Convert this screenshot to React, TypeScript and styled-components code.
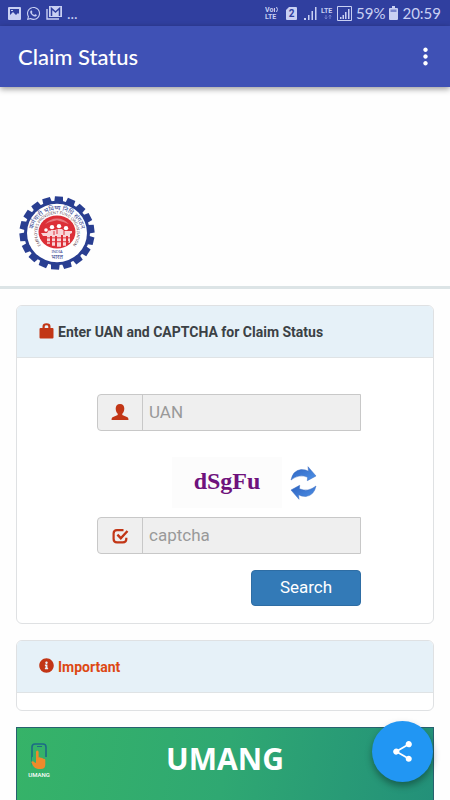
import React from "react";
import styled, { createGlobalStyle } from "styled-components";
import { FaInfoCircle, FaWhatsapp } from "react-icons/fa";
import { MdShare, MdMoreVert } from "react-icons/md";

const GlobalStyle = createGlobalStyle`
  *, *::before, *::after { box-sizing: border-box; }
  body {
    margin: 0;
    background: #fefefe;
    font-family: Roboto, "Liberation Sans", sans-serif;
    color: #3b4145;
  }
`;

const Page = styled.div`
  display: flex;
  flex-direction: column;
  height: 100vh;
  overflow: hidden;
`;

const StatusBar = styled.div`
  display: flex;
  flex: none;
  align-items: center;
  justify-content: space-between;
  height: 26px;
  padding: 0 9px 0 8px;
  background: #303f9f;
  color: #c9d0f3;
  font-family: Lato, sans-serif;
  font-size: 15px;
  line-height: 26px;
`;

const StatusGroup = styled.div<{ $gap: number }>`
  display: flex;
  align-items: center;
  gap: ${(p) => p.$gap}px;

  svg {
    display: block;
    flex: none;
  }
`;

const AppBar = styled.header`
  display: flex;
  flex: none;
  z-index: 1;
  align-items: center;
  justify-content: space-between;
  height: 61px;
  padding: 0 11px 0 18px;
  background: #3f51b5;
  color: #fff;
  box-shadow: 0 2px 6px rgba(0, 0, 0, 0.4);
`;

const Title = styled.h1`
  margin: 0;
  font-family: Lato, sans-serif;
  font-size: 22px;
  font-weight: 500;
  line-height: 28px;
`;

const MenuButton = styled.button`
  display: flex;
  padding: 0;
  border: 0;
  background: none;
  color: inherit;
`;

const LogoBand = styled.div`
  flex: none;
  padding: 109px 18px 16px;
  border-bottom: 3px solid #dce4e6;

  svg {
    display: block;
  }
`;

const Content = styled.main`
  display: flex;
  flex: 1;
  flex-direction: column;
  gap: 16px;
  min-height: 0;
  padding: 16px 16px 0;
`;

const Card = styled.section`
  flex: none;
  overflow: hidden;
  border: 1px solid #dfe1e3;
  border-radius: 6px;
  background: #fff;
`;

const CardHeader = styled.h2<{ $accent?: boolean }>`
  display: flex;
  align-items: center;
  gap: 4px;
  height: 52px;
  margin: 0;
  padding: 0 22px;
  border-bottom: 1px solid #dfe3e5;
  background: #e6f1f8;
  color: ${(p) => (p.$accent ? "#dd4814" : "#3b4145")};
  font-size: 14px;
  font-weight: 700;
  line-height: 20px;

  svg {
    flex: none;
    margin-bottom: 2px;
    color: #c23616;
  }
`;

const CardBody = styled.div`
  height: 17px;
`;

const Form = styled.form`
  display: flex;
  flex-direction: column;
  padding: 36px 72px 17px 80px;
`;

const InputGroup = styled.div`
  display: flex;
  height: 37px;
  border: 1px solid #c8c8c8;
  border-radius: 4px 0 0 4px;
  background: #efefef;
`;

const Addon = styled.label`
  display: flex;
  flex: none;
  align-items: center;
  justify-content: center;
  width: 45px;
  border-right: 1px solid #c8c8c8;
  color: #c23616;
`;

const Field = styled.input`
  flex: 1;
  min-width: 0;
  padding: 0 6px 2px;
  border: 0;
  background: none;
  color: #444;
  font-family: inherit;
  font-size: 17px;

  &::placeholder {
    color: #999;
    opacity: 1;
  }
`;

const CaptchaRow = styled.div`
  display: flex;
  align-items: center;
  justify-content: flex-end;
  gap: 8px;
  padding: 26px 44px 9px 0;
`;

const CaptchaCode = styled.div`
  width: 110px;
  height: 51px;
  background: #fcfcfc;
  color: #6f127c;
  font-family: "Liberation Serif", serif;
  font-size: 24px;
  font-weight: 700;
  line-height: 49px;
  text-align: center;
`;

const RefreshButton = styled.button`
  display: flex;
  padding: 0;
  border: 0;
  background: none;
`;

const SearchButton = styled.button`
  align-self: flex-end;
  width: 110px;
  height: 36px;
  margin-top: 16px;
  padding: 0 0 2px;
  border: 1px solid #2e6da4;
  border-radius: 4px;
  background: #337ab7;
  color: #fff;
  font-family: inherit;
  font-size: 17px;
  line-height: 32px;
`;

const Banner = styled.a`
  display: grid;
  flex: 1;
  grid-template-columns: 44px 1fr 44px;
  align-items: start;
  min-height: 73px;
  border: 1px solid #28616f;
  border-bottom: 0;
  background: linear-gradient(100deg, #36b368 0%, #2fa872 50%, #239079 100%);
  color: #fff;
  text-decoration: none;
`;

const UmangMark = styled.span`
  display: flex;
  flex-direction: column;
  align-items: center;
  padding-top: 15px;
  font-size: 6px;
  font-weight: 500;
  line-height: 9px;
`;

const BannerTitle = styled.span`
  padding-top: 13px;
  font-family: "Open Sans", sans-serif;
  font-size: 30px;
  font-weight: 700;
  line-height: 36px;
  text-align: center;
`;

const ShareButton = styled.button`
  position: fixed;
  right: 17px;
  bottom: 18px;
  display: flex;
  align-items: center;
  justify-content: center;
  width: 61px;
  height: 61px;
  padding: 0;
  border: 0;
  border-radius: 50%;
  background: #2196f3;
  color: #fff;
  box-shadow: 0 4px 7px rgba(0, 0, 0, 0.35);
`;

const PictureIcon = () => (
  <svg width="13" height="13" viewBox="0 0 13 13">
    <path
      fill="currentColor"
      fillRule="evenodd"
      d="M1 0h11a1 1 0 0 1 1 1v11a1 1 0 0 1-1 1H1a1 1 0 0 1-1-1V1a1 1 0 0 1 1-1zM2 2v6l3-3 3 3 2-2 1 1V2zM3 3h2v1H3z"
    />
  </svg>
);

const MailIcon = () => (
  <svg width="16" height="14" viewBox="0 0 16 14" fill="none" stroke="currentColor">
    <path d="M1 3v10h12" strokeWidth="1.4" />
    <path d="M3 0h13v11H3z" fill="currentColor" stroke="none" />
    <path d="M5.500 10V2.500l4 3.500 4-3.500V10" stroke="#303f9f" strokeWidth="1.500" />
  </svg>
);

const VolteIcon = () => (
  <svg width="14" height="16" viewBox="0 0 14 16" fill="currentColor">
    <g fontFamily="Roboto, sans-serif" fontWeight="700" fontSize="7">
      <text x="0" y="7">Vo</text>
      <text x="0" y="14">LTE</text>
    </g>
    <path d="M9.500 3v4M11.500 2q2 2.500 0 5" fill="none" stroke="currentColor" />
  </svg>
);

const SimIcon = () => (
  <svg width="11" height="13" viewBox="0 0 11 13">
    <path d="M3 0h7a1 1 0 0 1 1 1v11a1 1 0 0 1-1 1H1a1 1 0 0 1-1-1V3z" fill="currentColor" />
    <text x="5.500" y="10" textAnchor="middle" fill="#303f9f" fontFamily="Roboto, sans-serif" fontWeight="700" fontSize="10">
      2
    </text>
  </svg>
);

const SignalIcon = () => (
  <svg width="13" height="13" viewBox="0 0 13 13" fill="currentColor">
    <path d="M0 11h2v2H0zM4 8h1.500v5H4zM7.500 4H9v9H7.500zM11 0h1.500v13H11z" />
  </svg>
);

const LteIcon = () => (
  <svg width="14" height="15" viewBox="0 0 14 15">
    <text x="0" y="7" fill="currentColor" fontFamily="Roboto, sans-serif" fontWeight="700" fontSize="7">
      LTE
    </text>
    <path d="M5 9v4M3.800 11.500 5 13l1.200-1.500M9 13V9M7.800 10.500 9 9l1.200 1.500" fill="none" stroke="#7480cc" />
  </svg>
);

const BoxedSignalIcon = () => (
  <svg width="15" height="15" viewBox="0 0 15 15">
    <path d="M.5.5h14v14H.5z" fill="none" stroke="currentColor" />
    <path d="M3 11h1.500v2H3zM5.500 9H7v4H5.500zM8 6h1.500v7H8zM11 3h1.500v10H11z" fill="currentColor" />
  </svg>
);

const BatteryIcon = () => (
  <svg width="9" height="14" viewBox="0 0 9 14">
    <path d="M3 0h3v2h2a1 1 0 0 1 1 1v10a1 1 0 0 1-1 1H1a1 1 0 0 1-1-1V3a1 1 0 0 1 1-1h2z" fill="currentColor" />
    <path d="M1.500 3.500h6V6h-6z" fill="#7884cd" />
  </svg>
);

const LockIcon = () => (
  <svg width="15" height="16" viewBox="0 0 15 16" aria-hidden="true">
    <path
      fill="currentColor"
      fillRule="evenodd"
      d="M3.500 5V3.500Q3.500.3 7.500.3t4 3.200V5h2q1 0 1 1v8.500q0 1-1 1h-12q-1 0-1-1V6q0-1 1-1zm2.200 0h3.600V3.700Q9.300 2.300 7.500 2.300T5.700 3.700z"
    />
  </svg>
);

const UserIcon = () => (
  <svg width="18" height="18" viewBox="0 0 18 18" aria-hidden="true">
    <path
      fill="currentColor"
      d="M9 0c2.900 0 4.300 1.800 4.300 4.500 0 2.300-.7 4-2 5.200v1.200l5.200 2.300q1 .6 1 2.800H.5q0-2.200 1-2.800l5.200-2.300V9.700c-1.300-1.200-2-2.900-2-5.200C4.700 1.800 6.100 0 9 0z"
    />
  </svg>
);

const CheckIcon = () => (
  <svg width="17" height="16" viewBox="0 0 17 16" fill="none" stroke="currentColor" strokeWidth="2.200" aria-hidden="true">
    <path d="M11.500 2.100H5Q1.600 2.100 1.600 5.500v5.600q0 3.300 3.400 3.300h5.900q3.400 0 3.400-3.300V9.800" />
    <path d="m5.400 6.700 3.400 3.500L15.500 3" strokeWidth="2.400" />
  </svg>
);

const RefreshIcon = () => (
  <svg width="27" height="34" viewBox="0 0 27 34" aria-hidden="true">
    <defs>
      <linearGradient id="arrow" x1="0" y1="0" x2="1" y2="1">
        <stop offset="0" stopColor="#2d62c0" />
        <stop offset="1" stopColor="#4f93e8" />
      </linearGradient>
    </defs>
    <g fill="url(#arrow)" stroke="#3c6fc2" strokeWidth=".5" strokeLinejoin="round">
      <path d="M1 14Q3 4.500 11 3.600q4.500-.2 7.500 1.600L18 .7l8 9.300-8.700 4.700.3-3.500Q9 7.500 1 14z" />
      <path d="M26 20q-2 9.500-10 10.400-4.500.2-7.500-1.600l.5 4.500L1 24l8.700-4.700-.3 3.500Q18 26.500 26 20z" />
    </g>
  </svg>
);

const teeth = Array.from({ length: 18 }, (_, i) => i * 20);

const EpfoLogo = () => (
  <svg width="78" height="74" viewBox="-39 -38 78 76" preserveAspectRatio="none" role="img" aria-label="EPFO">
    <g fill="#293e91">
      {teeth.map((a) => (
        <path key={a} d="M-4-37.500h8l.5 7h-9z" transform={`rotate(${a + 3})`} />
      ))}
      <circle r="33" />
    </g>
    <circle r="30" fill="#fff" />
    <defs>
      <path id="outer" d="M-23 9.500A24.500 24.500 0 1 1 23 9.500" />
      <path id="inner" d="M-13 15.500A20 20 0 1 1 13 15.500" />
    </defs>
    <g fill="#344391" fontFamily="'Noto Sans', sans-serif">
      <text fontSize="6.500">
        <textPath href="#outer" startOffset="50%" textAnchor="middle">कर्मचारी भविष्य निधि संगठन</textPath>
      </text>
      <text fontSize="4" fill="#63444f">
        <textPath href="#inner" startOffset="50%" textAnchor="middle">EMPLOYEES PROVIDENT FUND ORGANISATION</textPath>
      </text>
      <text y="20.500" fontSize="4" textAnchor="middle">INDIA</text>
      <text y="27" fontSize="6" textAnchor="middle">भारत</text>
    </g>
    <ellipse cy="-1" rx="18.500" ry="17" fill="#dc2f37" />
    <g fill="#fff">
      <path d="M-12-9q5-6 12-6 7 0 12 6l-5-2-7-2-8 2z" opacity=".35" />
      <circle cx="-11" cy="-3" r="1.800" />
      <circle cx="-5" cy="-6" r="2.200" />
      <circle cx="2" cy="-7" r="2.200" />
      <circle cx="9" cy="-5" r="2.200" />
      <path d="M-16 0h6l2-3h6l2-1h5l2 2h8v2l-2 1v9h-2V3h-2v10H6V2H4v12H0V3h-2v10h-3V3h-2v8h-3V3h-4z" opacity=".8" />
    </g>
    <path d="M-12 9h24M-8-3h2M0-4v5M7-2v4M-3-2v4M-13 5h26" stroke="#dc2f37" />
  </svg>
);

const UmangIcon = () => (
  <svg width="18" height="27" viewBox="0 0 18 27" aria-hidden="true">
    <rect x="2" y="1" width="14" height="23" rx="3" fill="none" stroke="#1d6a86" strokeWidth="1.600" />
    <path d="M7 3.500h5" stroke="#1d6a86" />
    <path d="M2 14h15v12H1z" fill="#34b069" />
    <path
      fill="#ee8a2b"
      d="M6 9q0-1.500 1.300-1.500T8.600 9v5.500q1.800-.9 2.300.5 1.600-.6 2.100.8 1.800-.6 2.300 1v4.700q0 4.500-4.500 4.500H8q-3 0-4.800-3l-2-4q1.600-1.400 3.200.3L6 20z"
    />
  </svg>
);

export default function App() {
  return (
    <>
      <GlobalStyle />
      <Page>
        <StatusBar>
          <StatusGroup $gap={5}>
            <PictureIcon />
            <FaWhatsapp size={15} />
            <MailIcon />
            <span>...</span>
          </StatusGroup>
          <StatusGroup $gap={4}>
            <StatusGroup $gap={7}>
              <VolteIcon />
              <SimIcon />
              <SignalIcon />
            </StatusGroup>
            <StatusGroup $gap={2}>
              <LteIcon />
              <BoxedSignalIcon />
            </StatusGroup>
            <span>59%</span>
            <BatteryIcon />
            <span>20:59</span>
          </StatusGroup>
        </StatusBar>
        <AppBar>
          <Title>Claim Status</Title>
          <MenuButton type="button" aria-label="More options">
            <MdMoreVert size={27} />
          </MenuButton>
        </AppBar>
        <LogoBand>
          <EpfoLogo />
        </LogoBand>
        <Content>
          <Card>
            <CardHeader>
              <LockIcon />
              Enter UAN and CAPTCHA for Claim Status
            </CardHeader>
            <Form onSubmit={(e) => e.preventDefault()}>
              <InputGroup>
                <Addon htmlFor="uan" aria-label="UAN">
                  <UserIcon />
                </Addon>
                <Field id="uan" placeholder="UAN" />
              </InputGroup>
              <CaptchaRow>
                <CaptchaCode>dSgFu</CaptchaCode>
                <RefreshButton type="button" aria-label="Refresh captcha">
                  <RefreshIcon />
                </RefreshButton>
              </CaptchaRow>
              <InputGroup>
                <Addon htmlFor="captcha" aria-label="Captcha">
                  <CheckIcon />
                </Addon>
                <Field id="captcha" placeholder="captcha" />
              </InputGroup>
              <SearchButton type="submit">Search</SearchButton>
            </Form>
          </Card>
          <Card>
            <CardHeader $accent>
              <FaInfoCircle size={15} />
              Important
            </CardHeader>
            <CardBody />
          </Card>
          <Banner href="#umang">
            <UmangMark>
              <UmangIcon />
              UMANG
            </UmangMark>
            <BannerTitle>UMANG</BannerTitle>
          </Banner>
        </Content>
        <ShareButton type="button" aria-label="Share">
          <MdShare size={25} />
        </ShareButton>
      </Page>
    </>
  );
}
